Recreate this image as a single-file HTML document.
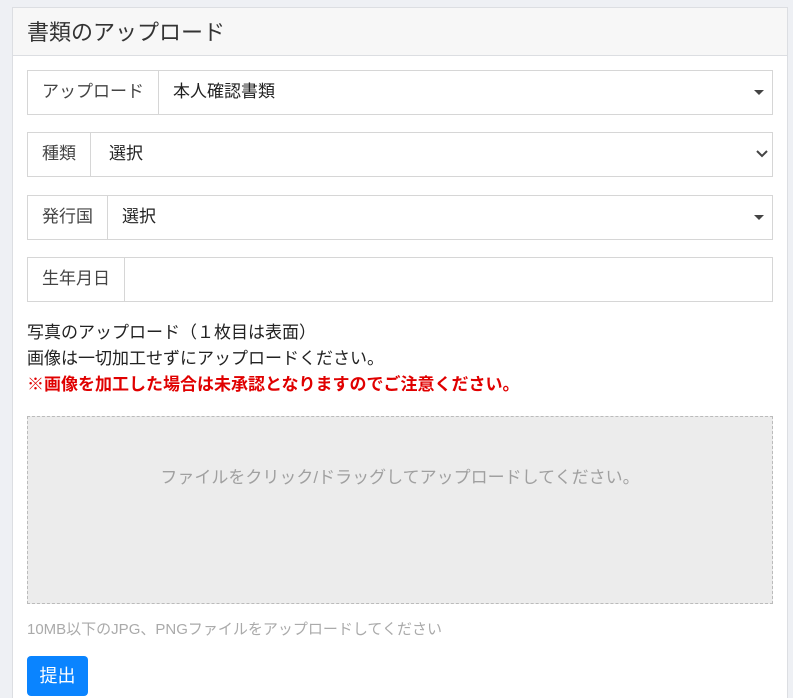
<!DOCTYPE html><html><head><meta charset="utf-8"><style>
*{box-sizing:border-box;margin:0;padding:0}
html{width:793px;height:698px;overflow:hidden}
body{width:793px;height:698px;background:#eef0f4;font-family:"Liberation Sans","Noto Sans CJK JP",sans-serif;color:#333;overflow:hidden;position:relative}
.card{position:absolute;left:12px;top:7px;width:776px;height:700px;background:#fff;border:1px solid #dcdee2;border-bottom:none}
.hd{height:48px;background:#f7f7f7;border-bottom:1px solid #dcdee2;font-size:22px;padding:7px 0 0 14px;color:#333}
.row{position:absolute;left:14px;width:746px;height:45px;border:1px solid #d6d6d6;display:flex;font-size:17px}
.lb{border-right:1px solid #d6d6d6;padding:0 14px;line-height:41px;color:#444;white-space:nowrap}
.v{padding-left:14px;line-height:41px;flex:1;position:relative;color:#222}
.tri{position:absolute;right:8px;top:19px;border-left:5px solid transparent;border-right:5px solid transparent;border-top:5px solid #444}
.txt{position:absolute;left:14px;top:312px;font-size:17px;line-height:26px;color:#222}
.red{color:#e00000;font-weight:bold}
.drop{position:absolute;left:14px;top:408px;width:746px;height:188px;border:1px dashed #bbb;background:#ececec;text-align:center;line-height:122px;color:#a0a0a0;font-size:17px}
.help{position:absolute;left:14px;top:610px;font-size:15px;color:#aaa}
.btn{position:absolute;left:14px;top:648px;width:61px;height:40px;background:#0a84ff;color:#fff;border-radius:4px;font-size:18px;text-align:center;line-height:40px}
</style></head><body><div class="card">
<div class="hd">書類のアップロード</div>
<div class="row" style="top:62px"><div class="lb">アップロード</div><div class="v">本人確認書類<span class="tri"></span></div></div>
<div class="row" style="top:124px"><div class="lb">種類</div><div class="v" style="padding-left:18px">選択<svg style="position:absolute;right:4px;top:16px" width="12" height="9" viewBox="0 0 12 9"><path d="M1 2l5 5 5-5" stroke="#444" stroke-width="2" fill="none"/></svg></div></div>
<div class="row" style="top:187px"><div class="lb">発行国</div><div class="v">選択<span class="tri"></span></div></div>
<div class="row" style="top:249px"><div class="lb">生年月日</div><div class="v"></div></div>
<div class="txt">写真のアップロード（１枚目は表面）<br>画像は一切加工せずにアップロードください。<br><span class="red">※画像を加工した場合は未承認となりますのでご注意ください。</span></div>
<div class="drop">ファイルをクリック/ドラッグしてアップロードしてください。</div>
<div class="help">10MB以下のJPG、PNGファイルをアップロードしてください</div>
<div class="btn">提出</div>
</div></body></html>
